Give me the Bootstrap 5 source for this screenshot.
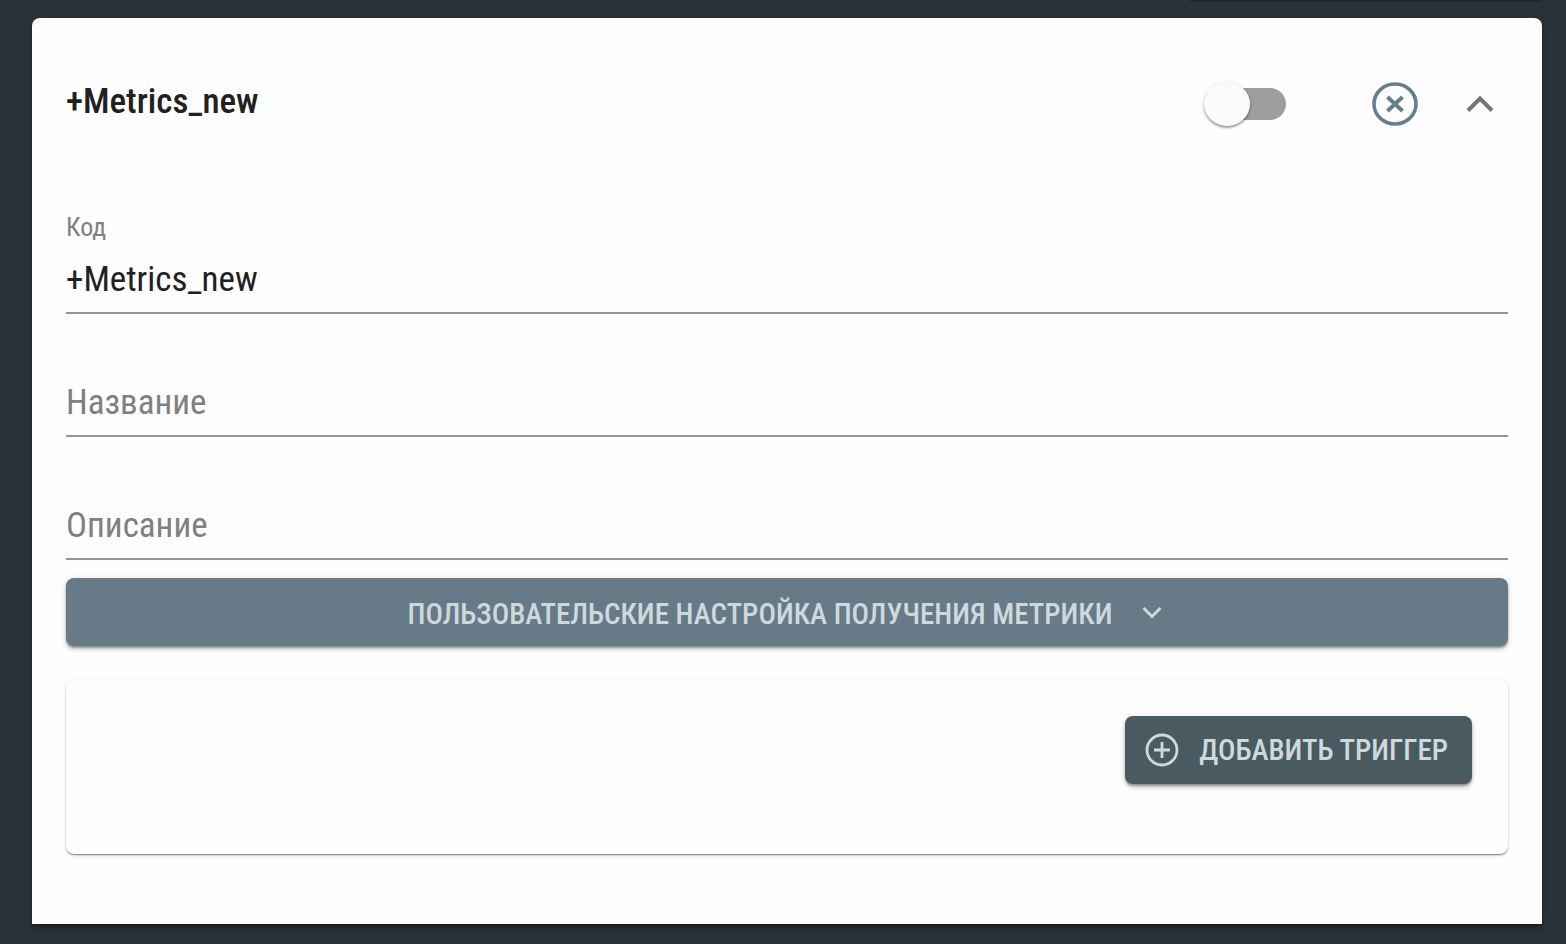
<!DOCTYPE html>
<html lang="ru">
<head>
<meta charset="utf-8">
<meta name="viewport" content="width=device-width, initial-scale=1">
<title>Metrics</title>
<link href="https://cdn.jsdelivr.net/npm/bootstrap@5.3.0/dist/css/bootstrap.min.css" rel="stylesheet">
<style>
  body { background: #2a3239; font-family: "Roboto Condensed", Roboto, sans-serif; color: #212121; }
  .page-wrap { padding: 0 24px 20px 32px; }
  .top-strip { height: 2px; width: 352px; background: #20282b; }
  .metric-card { border: 0; border-radius: 8px 8px 0 0; padding: 60px 34px 70px; margin-top: 16px; background: #fefefe;
    box-shadow: 0 2px 2px rgba(0,0,0,.28), 0 4px 4px rgba(0,0,0,.14), 0 2px 6px rgba(0,0,0,.12); }
  .metric-head { height: 52px; margin-bottom: 84px; padding-right: 14px; }
  .metric-title { font-size: 35px; line-height: 48px; font-weight: 500; padding-bottom: 4px; }
  .metric-switch { width: 82px; height: 44px; padding-left: 0; margin: 0 86px 0 0; min-height: 0; }
  .metric-switch .form-check-input { appearance: none; width: 82px; height: 44px; margin: 0; border: 0; border-radius: 22px; float: none; display: block;
    position: relative; background: none; }
  .metric-switch .form-check-input::before { content: ""; position: absolute; left: 12px; right: 0; top: 6px; height: 32px; border-radius: 16px; background: #9e9e9e; }
  .metric-switch .form-check-input::after { content: ""; position: absolute; left: 0; top: 0; width: 46px; height: 44px; border-radius: 50%; background: #fafafa;
    box-shadow: 0 2px 2px rgba(0,0,0,.3), 0 1px 4px rgba(0,0,0,.16); }
  .icon-btn { padding: 0; border: 0; background: none; line-height: 0; }
  .field-label { font-size: 26px; line-height: 26px; color: #808080; }
  .line-input { border: 0; border-bottom: 2px solid #949494; border-radius: 0; background: transparent; padding: 6px 0 0; height: 74px; font-size: 35px; line-height: 48px; color: #212121; }
  .line-input:focus { background: transparent; box-shadow: none; }
  .line-input::placeholder { color: #808080; opacity: 1; }
  .line-input + .line-input { margin-top: 49px; }
  .main-btn { border: 0; border-radius: 8px; height: 68px; font-size: 29px; line-height: 48px; font-weight: 500; color: #cfd8dc;
    box-shadow: 0 2px 2px rgba(0,0,0,.3), 0 4px 4px rgba(0,0,0,.12), 0 1px 8px rgba(0,0,0,.1); }
  .settings-btn, .settings-btn:hover { background: #667b87; color: #cfd8dc; }
  .settings-btn { gap: 30px; margin-top: 18px; padding: 4px 24px 0 20px; }
  .add-btn, .add-btn:hover { background: #4a5a61; color: #cfd8dc; }
  .add-btn { gap: 20px; padding: 0 24px 0 20px; }
  .trigger-panel { border: 0; border-radius: 8px; padding: 36px; min-height: 174px; margin-top: 34px; background: #fefefe;
    box-shadow: 0 2px 1px -1px rgba(0,0,0,.3), 0 1px 2px rgba(0,0,0,.24), 0 2px 5px rgba(0,0,0,.08); }
</style>
</head>
<body>
<div class="page-wrap">
  <div class="top-strip ms-auto"></div>
  <main class="card metric-card">
    <div class="metric-head d-flex align-items-center">
      <h1 class="metric-title mb-0 me-auto">+Metrics_new</h1>
      <div class="form-check form-switch metric-switch"><input class="form-check-input" type="checkbox" role="switch" aria-label="Включить"></div>
      <button type="button" class="icon-btn me-5" aria-label="Удалить">
        <svg width="46" height="44" viewBox="0 0 46 44" fill="none" stroke="#667e8b"><ellipse cx="23" cy="22" rx="21" ry="20" stroke-width="3.600"/><path d="M15.500 15l15 14M30.500 15l-15 14" stroke-width="3.800"/></svg>
      </button>
      <button type="button" class="icon-btn" aria-label="Свернуть">
        <svg width="28" height="20" viewBox="0 0 28 20" fill="none" stroke="#757575" stroke-width="4"><path d="M2 16.500L14 4.500L26 16.500"/></svg>
      </button>
    </div>
    <label class="field-label" for="code">Код</label>
    <input class="form-control line-input" id="code" type="text" value="+Metrics_new">
    <input class="form-control line-input" type="text" placeholder="Название" aria-label="Название">
    <input class="form-control line-input" type="text" placeholder="Описание" aria-label="Описание">
    <button type="button" class="btn main-btn settings-btn w-100 d-flex align-items-center justify-content-center">
      <span>ПОЛЬЗОВАТЕЛЬСКИЕ НАСТРОЙКА ПОЛУЧЕНИЯ МЕТРИКИ</span>
      <svg width="20" height="14" viewBox="0 0 20 14" fill="none" stroke="#cfd8dc" stroke-width="3"><path d="M1.500 1L10 9.500L18.500 1"/></svg>
    </button>
    <section class="card trigger-panel">
      <button type="button" class="btn main-btn add-btn d-flex align-items-center ms-auto">
        <svg width="34" height="34" viewBox="0 0 34 34" fill="none" stroke="#cfd8dc" stroke-width="2.800"><circle cx="17" cy="17" r="15"/><path d="M17 9v16M9 17h16"/></svg>
        <span>ДОБАВИТЬ ТРИГГЕР</span>
      </button>
    </section>
  </main>
</div>
<script src="https://cdn.jsdelivr.net/npm/bootstrap@5.3.0/dist/js/bootstrap.bundle.min.js"></script>
</body>
</html>
